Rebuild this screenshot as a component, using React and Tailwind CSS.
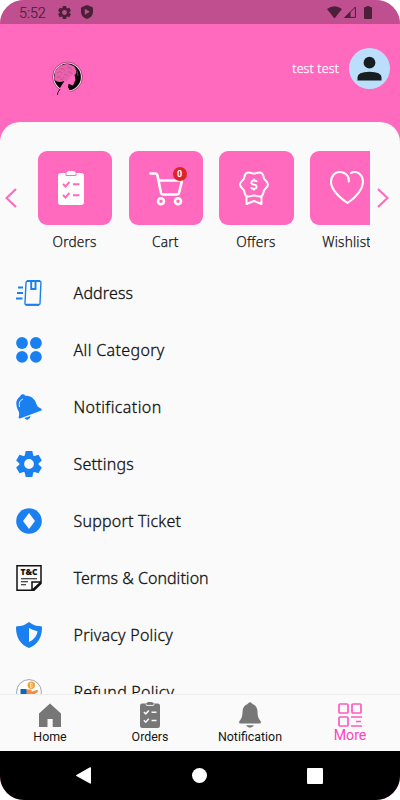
import React from "react";

const PINK = "#ff69be";
const BLUE = "#1a80f0";

function Clipboard({ className, mark }) {
  return (
    <svg viewBox="0 0 26 34" className={className} preserveAspectRatio="none">
      <path fill="currentColor" d="M3 2h5q1-2 3-2h4q2 0 3 2h5q3 0 3 3v26q0 3-3 3H3q-3 0-3-3V5q0-3 3-3Z" />
      <path d="M8 2.500v1q0 1 1 1h8q1 0 1-1v-1" fill="none" stroke={mark} strokeWidth="1.200" />
      <path d="m5 13 2.500 2.500 4-4.500M15 13.300h6.500M5 24l2.500 2.500 4-4.500M15 24.300h6.500" fill="none" stroke={mark} strokeWidth="1.900" />
    </svg>
  );
}

function Gear({ className }) {
  return (
    <svg viewBox="-13 -13 26 26" className={className} fill="currentColor">
      {[0, 60, 120, 180, 240, 300].map((a) => (
        <path key={a} transform={`rotate(${a})`} d="M-3.300-12.900h6.600L4.600-7h-9.200Z" />
      ))}
      <circle r="7.200" fill="none" stroke="currentColor" strokeWidth="4.600" />
    </svg>
  );
}

function StatusBar() {
  return (
    <div className="flex h-6 shrink-0 items-center bg-[#bf4f8f] pr-[28px] pl-[19px] text-[#4c2039]">
      <span className="w-[39px] pt-[2px] font-[Roboto] text-[14.300px] leading-[22px] font-light [-webkit-text-stroke:0.200px]">5:52</span>
      <Gear className="h-[13px] w-[13px]" />
      <svg viewBox="0 0 12 14" className="ml-[10px] h-[14px] w-3" fill="currentColor">
        <path fillRule="evenodd" d="m6 0 5 2q1 .4 1 1.500V7q0 5-6 7-6-2-6-7V3.500Q0 2.400 1 2ZM3.800 3.800v6l5-3Z" />
      </svg>
      <span className="flex-1" />
      <svg viewBox="0 0 15 13" className="h-[13px] w-[15px]" fill="currentColor">
        <path d="M7.500 12.500 0 3Q7.500-2.500 15 3Z" />
      </svg>
      <svg viewBox="0 0 12 12" className="ml-[2px] h-3 w-3">
        <path d="M11.400 1v10.400H1L11.400 1M6 6.200v5" fill="none" stroke="currentColor" strokeWidth="1" />
        <path d="M0 12 6 6v6Z" fill="currentColor" />
      </svg>
      <svg viewBox="0 0 8 13" className="ml-2 h-[13px] w-2" fill="currentColor">
        <path d="M2.500 0h3v1H7q1 0 1 1v10q0 1-1 1H1q-1 0-1-1V2q0-1 1-1h1.500Z" />
      </svg>
    </div>
  );
}

function Logo() {
  return (
    <svg viewBox="0 0 32 36" className="mt-[37px] ml-[52px] h-9 w-8">
      <circle cx="15.500" cy="16" r="14" fill="#050305" stroke="#f5d4e5" strokeWidth="1.200" />
      <circle cx="15.500" cy="16" r="14.900" fill="none" stroke="#35162a" strokeWidth=".4" />
      <path d="M13 19 8 27 6 35h13l-1-5-2-4 1-3 4 1.500 1.500-3.500 1-2-1.500-8-5-3-6 3Z" fill={PINK} />
      <path d="M4 20q-3-2-1-6-1-4 2-6 2-4 6-4 4-2 8 0 5 1 5 6 1 3-2 4-3 0-5 4-2 3-5 2-4 2-8 0Z" fill="#e863ac" />
      <path d="M5 17q2-3 4 0M8 19q3 0 4-3M5 12q3-3 5 0M8 8q3-2 5 2M15 6q4 0 5 3M16 11q3-1 4 2M12 14q2-2 4 1" fill="none" stroke="#b54582" strokeWidth=".6" />
      <path d="M23 7q3 3 3 8" fill="none" stroke="#9b3069" strokeWidth=".9" />
      <path d="M17 23q-1 3 1 5M8 28q-3 4-2.500 6" fill="none" stroke="#170510" strokeWidth=".9" />
    </svg>
  );
}

function CartIcon() {
  return (
    <div className="relative mt-[19px] ml-[20px] h-[36px] w-[39px]">
      <svg viewBox="0 0 34 36" className="h-9 w-[34px]" fill="none" stroke="white" strokeWidth="2.600" strokeLinecap="round" strokeLinejoin="round">
        <path d="M1.500 3.500H6q2 0 2.500 2L12 23q.4 1.500 2 1.500h14q1.600 0 2-1.500L33 10.500H10" />
        <circle cx="12" cy="31.300" r="3" /><circle cx="29" cy="31.300" r="3" />
      </svg>
      <span className="absolute -top-[3px] left-[24px] flex h-[14px] w-[14px] items-center justify-center rounded-full bg-[#dc2428] font-[Roboto] text-[9px] leading-none font-bold text-white">0</span>
    </div>
  );
}

function OffersIcon() {
  return (
    <svg viewBox="0 0 30 34" className="mt-5 ml-5 h-[34px] w-[30px]" fill="none" stroke="white" strokeWidth="2" strokeLinejoin="round">
      <path d="M15 2.600C17 2.600 18 1.300 21 1.400 25 1.800 24 5.500 25 7.500 26 9.500 29 11 29 13.500 29 16 26 17.500 25 19.500 24 21.500 25 25.200 21 25.600 18 25.700 17 24.400 15 24.400 13 24.400 12 25.700 9 25.600 5 25.200 6 21.500 5 19.500 4 17.500 1 16 1 13.500 1 11 4 9.500 5 7.500 6 5.500 5 1.800 9 1.400 12 1.300 13 2.600 15 2.600Z" />
      <path d="M7.500 25.500V33l7.500-3 7.500 3v-7.500" />
      <path d="M17.800 11.200q-.300-1.700-2.800-1.700t-2.600 2 2.600 2.100 2.600 2.200-2.600 2.100-2.800-1.800M15 7.800v2M15 17.500v2" strokeWidth="1.900" />
    </svg>
  );
}

function HeartIcon() {
  return (
    <svg viewBox="0 0 34 34" className="mt-5 ml-5 h-[34px] w-[34px]" fill="none" stroke="white" strokeWidth="2.100" strokeLinecap="round" strokeLinejoin="round">
      <path d="M18.800 10.500C19.500 4 14 1 9.500 1S1 5 1 10.500C1 19 9 26 17.500 32 26 26 33 19 33 10.500 33 5 29 1 25 1q-2.500 0-4 1" />
    </svg>
  );
}

const cards = [
  { label: "Orders", icon: <Clipboard className="mt-5 ml-5 h-[34px] w-[26px] text-white" mark={PINK} /> },
  { label: "Cart", icon: <CartIcon /> },
  { label: "Offers", icon: <OffersIcon /> },
  { label: "Wishlist", icon: <HeartIcon /> },
];

function Chevron({ right }) {
  return (
    <svg viewBox="0 0 12 20" className="h-5 w-3 shrink-0" fill="none" stroke={PINK} strokeWidth="2.200">
      <path d={right ? "m1 1 9.500 9L1 19" : "m11 1-9.500 9 9.500 9"} />
    </svg>
  );
}

function Carousel() {
  return (
    <div className="flex h-[119.500px] items-start pt-[6.500px]">
      <div className="flex h-[93px] w-[30px] items-center pl-[5px]"><Chevron /></div>
      <div className="flex w-[340px] gap-[16.500px] overflow-hidden pl-2">
        {cards.map((c) => (
          <div key={c.label} className="flex w-[74.200px] shrink-0 flex-col items-center">
            <div className="h-[74px] w-full rounded-[9px] bg-[#ff69be]">{c.icon}</div>
            <span className="mt-[7px] pr-[1px] text-[13.600px] leading-5 font-light tracking-[0.200px] whitespace-nowrap [-webkit-text-stroke:0.250px]">{c.label}</span>
          </div>
        ))}
      </div>
      <div className="flex h-[93px] w-[30px] items-center pl-[6.500px]"><Chevron right /></div>
    </div>
  );
}

const svgClass = "h-[26px] w-[26px] shrink-0";

const rows = [
  {
    label: "Address", text: "tracking-[0.150px]",
    icon: (
      <svg viewBox="0 0 26 26" className={svgClass} fill="none" stroke={BLUE}>
        <path d="M12 1h11.500q1.500 0 1.400 1.500L24 23.500q-.1 1.500-1.500 1.500h-12q-1.500 0-1.500-1.500L10 2.500Q10.200 1 12 1Z" strokeWidth="1.400" />
        <path d="M11 1h13M10 24.800h13" strokeWidth="1.900" />
        <path d="M15.200 1v8h4.300V1M2 7.500h5M1 13h6M0 18.500h6.500" strokeWidth="1.900" />
      </svg>
    ),
  },
  {
    label: "All Category", text: "tracking-[0.350px]",
    icon: (
      <svg viewBox="0 0 26 26" className={svgClass} fill={BLUE}>
        <circle cx="6" cy="6" r="5.900" /><circle cx="19.900" cy="6" r="5.900" />
        <circle cx="6" cy="19.900" r="5.900" /><circle cx="19.900" cy="19.900" r="5.900" />
      </svg>
    ),
  },
  {
    label: "Notification", text: "tracking-[0.400px]",
    icon: (
      <svg viewBox="0 0 26 26" className={svgClass} fill={BLUE}>
        <path d="M4 2.500Q4.500.5 6.500.3t2.700 1.400C14 1.500 18.500 4 20 9q1 4 4.800 5.500 1.500.8.600 2L4 24.500q-1.700.2-1.300-1.700Q4 19 1.500 15C-.5 10-.3 5.500 4 2.500Z" />
        <path d="m8.500 24 6-2q-.3 3-2.500 3.600T8.500 24Z" />
        <path d="M3.500 13Q2 7 7 5" fill="none" stroke="#dcecff" strokeWidth="1" />
      </svg>
    ),
  },
  { label: "Settings", text: "tracking-[0.200px]", icon: <Gear className="h-[26px] w-[26px] shrink-0 text-[#1a80f0]" /> },
  {
    label: "Support Ticket", text: "tracking-[0.200px]",
    icon: (
      <svg viewBox="0 0 26 26" className={svgClass}>
        <circle cx="13" cy="13" r="12.800" fill={BLUE} />
        <path d="m13 5 6 8-6 8-6-8Z" fill="#fafafa" />
      </svg>
    ),
  },
  {
    label: "Terms & Condition", text: "tracking-[0.040px]",
    icon: (
      <svg viewBox="0 0 26 26" className={svgClass}>
        <path d="M1 .8h24v17.700l-7 6.700H1ZM25 17h-9v8M16.300 25 25 17" fill="none" stroke="#111" strokeWidth="1.500" />
        <text x="13" y="9.700" textAnchor="middle" textLength="17" lengthAdjust="spacingAndGlyphs" fontFamily="Open Sans, sans-serif" fontWeight="800" fontSize="8" fill="#111">T&amp;C</text>
        <path d="M5 13.800h16M5 16.800h7M5 19.700h5" stroke="#111" strokeWidth="1.100" />
      </svg>
    ),
  },
  {
    label: "Privacy Policy", text: "tracking-[0.240px]",
    icon: (
      <svg viewBox="0 0 26 26" className={svgClass}>
        <path d="M13 0q5 4.200 12 4.300 1 0 1 1.200C26 15 22 22.500 13 26 4 22.500 0 15 0 5.500q0-1.200 1-1.200Q8 4.200 13 0Z" fill={BLUE} />
        <path d="M13 6q3 2 8.500 3.200-.5 6.800-8.500 10.800Z" fill="#fafafa" />
      </svg>
    ),
  },
  {
    label: "Refund Policy", text: "tracking-[0.240px]",
    icon: (
      <svg viewBox="0 0 26 26" className={svgClass}>
        <circle cx="13" cy="13" r="12.400" fill="#fff" stroke="#8f98a6" strokeWidth=".9" />
        <circle cx="15.300" cy="6.300" r="3.700" fill="#f9a12f" />
        <path d="M14.500 4v4.600h1.200q1.200-1.200 0-2.300 1-1.200-.2-2.300Z" fill="none" stroke="#fff0cf" strokeWidth=".7" />
        <path d="M9 10.500h5q3 1 1 2.200l6-1.700q2.500 0 .5 2L18 16H9Z" fill="#f18c48" />
        <path d="M4.500 10h6v5.500h-6Z" fill="#0867bf" />
      </svg>
    ),
  },
];

const tabText = "font-[Roboto] text-[12.400px] leading-[15px] whitespace-nowrap text-[#151515]";

function BottomNav() {
  return (
    <nav className="grid h-[57px] shrink-0 grid-cols-4 border-t border-[#ececec] bg-[#fafafa] pt-[7px]">
      <div className="flex flex-col items-center gap-[1px]">
        <svg viewBox="0 0 22 25" className="h-[26px] w-[22px]" fill="#777">
          <path d="M11 1 22 11v13.500h-8.300v-8H8.500v8H0V11Z" />
        </svg>
        <span className={tabText}>Home</span>
      </div>
      <div className="flex flex-col items-center gap-[1px]">
        <Clipboard className="h-[26px] w-5 text-[#777]" mark="#fafafa" />
        <span className={tabText}>Orders</span>
      </div>
      <div className="flex flex-col items-center gap-[1px]">
        <svg viewBox="0 0 22 26" className="h-[26px] w-[22px]" fill="#777">
          <path d="M8.500 2Q11-1.500 13.500 2q5 1.800 5 8 0 6 3 9 1.300 2.300-1 2.500h-19q-2.300-.2-1-2.500 3-3 3-9 0-6.200 5-8ZM7 23.300h8q-1.500 2.400-4 2.400t-4-2.400Z" />
        </svg>
        <span className={tabText}>Notification</span>
      </div>
      <div className="flex flex-col items-center pt-[1px]">
        <svg viewBox="0 0 24 24" className="h-6 w-6" fill="none" stroke="#ff5abc" strokeWidth="1.700">
          <rect x="1" y="1" width="9" height="9" rx="1" /><rect x="14" y="1" width="9" height="9" rx="1" />
          <rect x="1" y="14" width="9" height="9" rx="1" />
          <path d="M13 14h11M18 18.500h5M13 23h11" />
        </svg>
        <span className="font-[Roboto] text-[14.200px] leading-[16px] text-[#ff42bd]">More</span>
      </div>
    </nav>
  );
}

export default function App() {
  return (
    <div className="h-[800px] w-[400px] overflow-hidden bg-white font-['Noto_Sans',sans-serif] text-[#111]">
      <div className="flex h-full flex-col overflow-hidden rounded-[24px] bg-[#ff69be]">
        <StatusBar />
        <header className="flex h-[98px] shrink-0 items-start bg-[#ff69be] pr-[10px]">
          <Logo />
          <span className="mt-[35px] ml-auto text-[12.400px] leading-5 font-light tracking-[0.150px] text-white [-webkit-text-stroke:0.250px]">test test</span>
          <div className="mt-[24px] ml-[10px] h-[41px] w-[41px] rounded-full bg-[#bbdefb] p-2">
            <svg viewBox="0 0 25 25" className="h-[25px] w-[25px]" fill="#171e20">
              <circle cx="12.500" cy="6.700" r="5.900" />
              <path d="M.5 24.500v-3q0-5.500 12-5.700 12 .2 12 5.700v3Z" />
            </svg>
          </div>
        </header>
        <main className="min-h-0 flex-1 overflow-hidden rounded-t-[20px] bg-[#fafafa] pt-[22.500px]">
          <Carousel />
          {rows.map((r) => (
            <div key={r.label} className="flex h-[57px] items-center gap-[31.500px] pl-4">
              {r.icon}
              <span className={"text-[16px] leading-6 font-light whitespace-nowrap [-webkit-text-stroke:0.300px] " + r.text}>{r.label}</span>
            </div>
          ))}
        </main>
        <BottomNav />
        <div className="flex h-[49px] shrink-0 items-center bg-black pl-[76px]">
          <svg viewBox="0 0 15 17" className="h-[17px] w-[15px]" fill="white"><path d="M14 .3q1-.4 1 .7v15q0 1-1 .6L.4 9q-.7-.5 0-1Z" /></svg>
          <span className="ml-[101px] h-[15px] w-[15px] rounded-full bg-white" />
          <span className="ml-[100px] h-4 w-4 rounded-[1px] bg-white" />
        </div>
      </div>
    </div>
  );
}
